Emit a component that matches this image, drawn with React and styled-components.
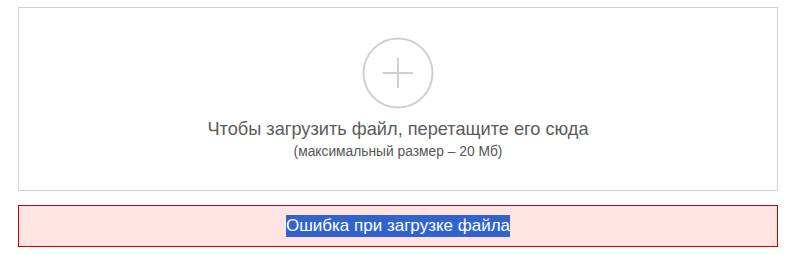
import React from 'react';
import styled, { createGlobalStyle } from 'styled-components';

const GlobalStyle = createGlobalStyle`
  body {
    margin: 0;
    background: #ffffff;
    font-family: "Liberation Sans", Arial, sans-serif;
  }
`;

export default function App() {
  return (
    <Page>
      <GlobalStyle />
      <DropZone>
        <PlusCircle aria-hidden="true">
          <svg width="72" height="72" viewBox="0 0 72 72">
            <circle cx="36" cy="36" r="34.5" fill="none" stroke="#cfcfcf" strokeWidth="2" />
            <line x1="21" y1="36" x2="51" y2="36" stroke="#cfcfcf" strokeWidth="2" />
            <line x1="36" y1="21" x2="36" y2="51" stroke="#cfcfcf" strokeWidth="2" />
          </svg>
        </PlusCircle>
        <Title>Чтобы загрузить файл, перетащите его сюда</Title>
        <Hint>(максимальный размер – 20 Мб)</Hint>
      </DropZone>
      <ErrorBox>
        <Selected>Ошибка при загрузке файла</Selected>
      </ErrorBox>
    </Page>
  );
}

const Page = styled.div`
  display: flex;
  flex-direction: column;
  gap: 14px;
  padding: 7px 15px 0 18px;
`;

const DropZone = styled.div`
  height: 184px;
  border: 1px solid #d2d2d2;
  display: flex;
  flex-direction: column;
  align-items: center;
  padding-top: 29px;
  box-sizing: border-box;
`;

const PlusCircle = styled.div`
  width: 72px;
  height: 72px;
`;

const Title = styled.div`
  margin-top: 9px;
  font-size: 18.2px;
  line-height: 22px;
  color: #5c5c5c;
`;

const Hint = styled.div`
  margin-top: 4px;
  font-size: 13.8px;
  line-height: 16px;
  color: #555555;
`;

const ErrorBox = styled.div`
  height: 42px;
  box-sizing: border-box;
  border: 1px solid #cc0000;
  background: #ffe3e3;
  display: flex;
  align-items: center;
  justify-content: center;
`;

const Selected = styled.span`
  background: #3163d0;
  color: #ffffff;
  font-size: 17px;
  line-height: 20px;
  padding: 1px 0;
`;
